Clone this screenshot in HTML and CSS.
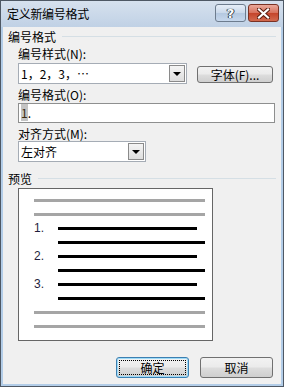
FILE: index.html
```html
<!DOCTYPE html>
<html lang="zh-CN">
  <head>
    <meta charset="utf-8">
    <title>定义新编号格式</title>
    <link rel="stylesheet" href="styles.css">
  </head>
  <body>
    <div class="window">
      <div class="titlebar">
        <span class="title">定义新编号格式</span>
        <div class="caption">
          <span class="cap help">?</span>
          <span class="cap close">
            <svg width="13" height="11" viewBox="0 0 13 11">
              <path d="M2 1.5 L11 9.5 M11 1.5 L2 9.5" stroke="#5a1d10" stroke-width="4.2" stroke-linecap="square"/>
              <path d="M2 1.5 L11 9.5 M11 1.5 L2 9.5" stroke="#ffffff" stroke-width="2.2" stroke-linecap="square"/>
            </svg>
          </span>
        </div>
      </div>

      <div class="client">
        <div class="group-head"><span>编号格式</span><i class="rule"></i></div>
        <div class="group">
          <div class="label label-first">编号样式(N):</div>
          <div class="combo-row">
            <div class="combo combo-wide">
              <span class="value">1，2，3，…</span>
              <span class="drop"><i class="arrow"></i></span>
            </div>
            <div class="btn btn-font">字体(F)...</div>
          </div>
          <div class="label">编号格式(O):</div>
          <div class="input"><span class="sel">1</span>.</div>
          <div class="label">对齐方式(M):</div>
          <div class="combo combo-narrow">
            <span class="value">左对齐</span>
            <span class="drop"><i class="arrow"></i></span>
          </div>
        </div>

        <div class="group-head preview-head"><span>预览</span><i class="rule"></i></div>
        <div class="group">
          <div class="preview">
            <i class="bar"></i>
            <i class="bar"></i>
            <div class="item"><span class="num">1.</span><i class="bar ink short"></i></div>
            <i class="bar ink long"></i>
            <div class="item"><span class="num">2.</span><i class="bar ink short"></i></div>
            <i class="bar ink long"></i>
            <div class="item"><span class="num">3.</span><i class="bar ink short"></i></div>
            <i class="bar ink long"></i>
            <i class="bar"></i>
            <i class="bar"></i>
          </div>
        </div>

        <div class="actions">
          <div class="btn btn-default">确定</div>
          <div class="btn">取消</div>
        </div>
      </div>
    </div>
  </body>
</html>
```

FILE: styles.css
```css
body {
    margin: 0;
    font-family: "Noto Sans CJK SC", sans-serif;
    font-size: 12px;
    color: #000;
}

.window {
    width: 284px;
    height: 387px;
    box-sizing: border-box;
    border: 1px solid #4e5864;
    padding: 0 2px 2px 2px;
    background: #b3cde8;
    display: flex;
    flex-direction: column;
}

/* title bar */
.titlebar {
    height: 26px;
    margin: 0 -2px;
    padding: 0 4px 0 6px;
    display: flex;
    justify-content: space-between;
    background: linear-gradient(#d6e1ee, #c0d1e5);
}

.title {
    line-height: 26px;
    letter-spacing: -0.3px;
}

.caption {
    display: flex;
    gap: 2px;
    margin-top: 3px;
}

.cap {
    width: 31px;
    height: 18px;
    box-sizing: border-box;
    border: 1px solid #6d7c8e;
    border-radius: 3px;
    display: flex;
    align-items: center;
    justify-content: center;
}

.help {
    background: linear-gradient(#e6eef8 0, #c9d8ea 50%, #b4c8e0 51%, #c6d7ec 100%);
    font-family: "DejaVu Sans", sans-serif;
    font-weight: bold;
    font-size: 13px;
    color: #fff;
    text-shadow: 0 0 1px #34404e, 0 0 1px #34404e, 1px 0 0 #34404e, -1px 0 0 #34404e;
}

.close {
    border-color: #7a3224;
    background: linear-gradient(#eaa99b 0, #d7705b 50%, #c4442a 51%, #d26a4f 100%);
}

/* client area */
.client {
    flex: 1;
    background: #f0f0f0;
    padding: 3px 0 0 5px;
    display: flex;
    flex-direction: column;
}

.group-head {
    display: flex;
    align-items: center;
    line-height: 13px;
    height: 13px;
}

.rule {
    flex: 1;
    height: 1px;
    margin: 0 5px 0 6px;
    background: #d5dfe5;
}

.preview-head {
    margin-top: 10px;
}

.group {
    margin-left: 10px;
}

.label {
    line-height: 13px;
    height: 13px;
    margin-top: 4px;
}

.combo-row {
    display: flex;
    align-items: flex-start;
    margin-top: 3px;
}

.combo {
    height: 21px;
    box-sizing: border-box;
    border: 1px solid #a5acb5;
    background: #fff;
    display: flex;
    justify-content: space-between;
    align-items: center;
    padding: 0 1px 0 2px;
}

.combo-wide {
    width: 169px;
}

.combo-narrow {
    width: 128px;
    margin-top: 1px;
}

.value {
    line-height: 19px;
}

.drop {
    width: 16px;
    height: 17px;
    box-sizing: border-box;
    border: 1px solid #8a8a8a;
    background: linear-gradient(#f4f4f4, #dedede);
    display: flex;
    align-items: center;
    justify-content: center;
}

.arrow {
    width: 0;
    height: 0;
    border-left: 4px solid transparent;
    border-right: 4px solid transparent;
    border-top: 4px solid #000;
    margin-top: 1px;
}

.input {
    margin-top: 2px;
    width: 257px;
    height: 20px;
    box-sizing: border-box;
    border: 1px solid #8e8f8f;
    background: #fff;
    padding: 0 2px;
    line-height: 18px;
}

.sel {
    background: #c4c4c4;
    color: #3a2a10;
}

/* buttons */
.btn {
    height: 21px;
    width: 73px;
    box-sizing: border-box;
    border: 1px solid #707070;
    border-radius: 3px;
    background: linear-gradient(#f2f2f2 0, #ebebeb 48%, #dddddd 52%, #cfcfcf 100%);
    display: flex;
    align-items: center;
    justify-content: center;
    line-height: 19px;
}

.btn-font {
    width: 76px;
    height: 17px;
    margin: 3px 0 0 10px;
    line-height: 15px;
}

.btn-default {
    border-color: #3c7fb1;
    box-shadow: inset 0 0 0 1px #9edbf8;
    outline: 1px dotted #000;
    outline-offset: -4px;
}

.actions {
    display: flex;
    justify-content: flex-end;
    gap: 11px;
    margin-top: 16px;
    padding-right: 8px;
}

/* preview */
.preview {
    width: 195px;
    height: 153px;
    box-sizing: border-box;
    border: 1px solid #666;
    background: #fff;
    margin-top: 3px;
    padding: 10px 7px 0 15px;
    display: flex;
    flex-direction: column;
    gap: 11px;
}

.bar {
    display: block;
    height: 3px;
    background: #a5a5a5;
}

.bar.ink {
    background: #000;
}

.item {
    display: flex;
    align-items: center;
    height: 3px;
}

.num {
    width: 24px;
    font-family: "Liberation Sans", sans-serif;
    font-size: 12px;
    line-height: 3px;
    color: #1e1e3c;
}

.short {
    width: 139px;
}

.long {
    width: 147px;
    margin-left: 24px;
}
```
